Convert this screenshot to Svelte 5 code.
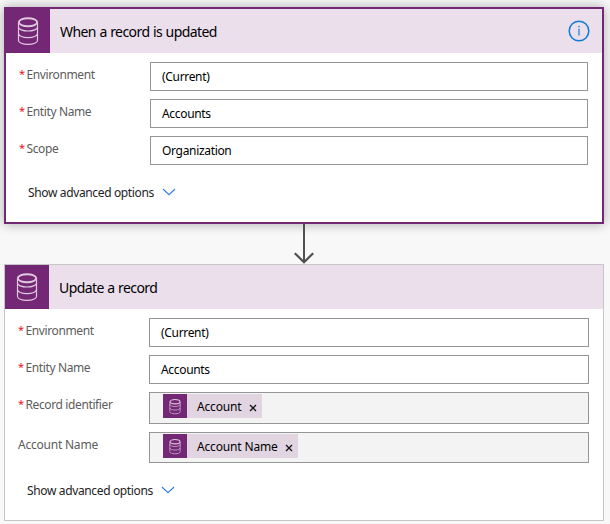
<script>
  const trigger = [
    { label: 'Environment', value: '(Current)', required: true },
    { label: 'Entity Name', value: 'Accounts', required: true },
    { label: 'Scope', value: 'Organization', required: true }
  ];
  const action = [
    { label: 'Environment', value: '(Current)', required: true },
    { label: 'Entity Name', value: 'Accounts', required: true },
    { label: 'Record identifier', token: 'Account', required: true, cls: 'record' },
    { label: 'Account Name', token: 'Account Name', cls: 'name' }
  ];
</script>

{#snippet database()}
  <svg class="db" viewBox="0 0 22 30" fill="none" stroke="#dfc9df">
    <ellipse cx="11" cy="6.2" rx="9.2" ry="4" stroke-width="1.9" />
    <path stroke-width="1.2" d="M1.5 6.5v18c0 2.2 4.2 3.9 9.5 3.9s9.5-1.7 9.5-3.9v-18M1.5 11c0 2.3 4.2 4 9.5 4s9.5-1.7 9.5-4M1.5 17.6c0 2.3 4.2 4 9.5 4s9.5-1.7 9.5-4" />
  </svg>
{/snippet}

{#snippet fields(rows)}
  <div class="fields">
    {#each rows as row}
      <div class="row {row.cls ?? ''}">
        <div class="label">
          {#if row.required}<span class="star">*</span>{/if}<span>{row.label}</span>
        </div>
        {#if row.token}
          <div class="input token-input">
            <div class="token">
              <span class="token-icon">{@render database()}</span>
              <span class="token-text">{row.token}</span>
              <svg class="close" viewBox="0 0 8 8"><path d="M1 1l6 6M7 1L1 7" stroke="#111" stroke-width="1.3" /></svg>
            </div>
          </div>
        {:else}
          <div class="input"><span>{row.value}</span></div>
        {/if}
      </div>
    {/each}
  </div>
{/snippet}

{#snippet advanced()}
  <div class="advanced">
    <span>Show advanced options</span>
    <svg width="14" height="9" viewBox="0 0 14 9" fill="none"><path d="M1 1l6 5.7 6-5.7" stroke="#2f7fe0" stroke-width="1.1" /></svg>
  </div>
{/snippet}

<main>
  <section class="card selected">
    <header>
      <div class="icon">{@render database()}</div>
      <h2>When a record is updated</h2>
      <svg class="info" width="22" height="22" viewBox="0 0 22 22">
        <circle cx="11" cy="11" r="9.8" fill="none" stroke="#0f7bd8" stroke-width="1.5" />
        <path d="M11 8.8v6.6" stroke="#0f7bd8" stroke-width="1.2" />
        <circle cx="11" cy="6.6" r=".8" fill="#0f7bd8" />
      </svg>
    </header>
    {@render fields(trigger)}
    {@render advanced()}
  </section>

  <svg class="arrow" width="22" height="40" viewBox="0 0 22 40" fill="none" stroke="#505050">
    <path d="M11 0v38" stroke-width="2" />
    <path d="M1.8 29.2l9.2 9 9.2-9" stroke-width="2.2" />
  </svg>

  <section class="card second">
    <header>
      <div class="icon">{@render database()}</div>
      <h2>Update a record</h2>
    </header>
    {@render fields(action)}
    {@render advanced()}
  </section>
</main>

<style>
  :global(body) { background: #f8f8f8; }
  main {
    box-sizing: border-box;
    width: 610px;
    height: 524px;
    padding: 7px 6px 3px 4px;
    overflow: hidden;
    background: #f8f8f8;
    font-family: "Noto Sans", "Open Sans", sans-serif;
    font-size: 12px;
    color: #000;
    display: flex;
    flex-direction: column;
  }
  .card {
    box-sizing: border-box;
    width: 600px;
    background: #fff;
    flex: none;
  }
  .selected {
    height: 217px;
    border: 2px solid #742774;
    box-shadow: 0 0 11px rgba(0, 0, 0, .32);
  }
  .second {
    height: 257px;
    border: 1px solid #c6c6c6;
  }
  header {
    display: flex;
    align-items: center;
    height: 44px;
    background: #ebdfec;
  }
  .icon {
    width: 44px;
    height: 44px;
    background: #742774;
    display: flex;
    align-items: center;
    justify-content: center;
  }
  .icon .db { width: 22px; height: 30px; margin-right: 1px; }
  h2 {
    margin: 2px auto 0 10px;
    font-weight: 400;
    font-size: 14px;
    line-height: 20px;
    letter-spacing: -.57px;
    word-spacing: .4px;
    white-space: nowrap;
  }
  .info { margin: 0 12px 0 0; }
  .fields {
    display: flex;
    flex-direction: column;
    gap: 8px;
    padding: 9px 14px 0 13px;
  }
  .row {
    display: flex;
    height: 29px;
  }
  .row.record { height: 32px; }
  .row.name { height: 31px; }
  .label {
    width: 131px;
    flex: none;
    color: #5c5c5c;
    line-height: 16px;
    padding-top: 5px;
    letter-spacing: -.38px;
    white-space: nowrap;
    display: flex;
  }
  .row.name .label { letter-spacing: -.22px; }
  .star { width: 7.5px; color: #e81123; font-size: 11px; line-height: 14px; }
  .input {
    box-sizing: border-box;
    flex: 1;
    border: 1px solid #959595;
    background: #fff;
    padding: 6px 11px 0;
    line-height: 16px;
    letter-spacing: -.3px;
  }
  .input > span { letter-spacing: -.32px; }
  .token-input {
    background: #f3f3f3;
    padding: 1px 13px 0;
  }
  .token {
    display: inline-flex;
    align-items: center;
    height: 24px;
    background: #e2d5e2;
    padding-right: 5px;
    vertical-align: top;
    letter-spacing: -.16px;
  }
  .token-icon {
    width: 24px;
    height: 24px;
    background: #742774;
    display: flex;
    align-items: center;
    justify-content: center;
  }
  .token-icon .db { width: 12px; height: 17px; }
  .token-text { margin: 2px 7px 0 10px; white-space: nowrap; }
  .close { width: 8px; height: 8px; margin-top: 4px; }
  .name .close { margin-top: 3px; }
  .advanced {
    display: flex;
    align-items: center;
    height: 16px;
    line-height: 16px;
    padding: 20px 0 0 22px;
    color: #222;
    letter-spacing: -.36px;
    gap: 8px;
  }
  .advanced svg { margin-top: -1px; }
  .arrow {
    flex: none;
    margin-left: 289px;
  }
</style>
